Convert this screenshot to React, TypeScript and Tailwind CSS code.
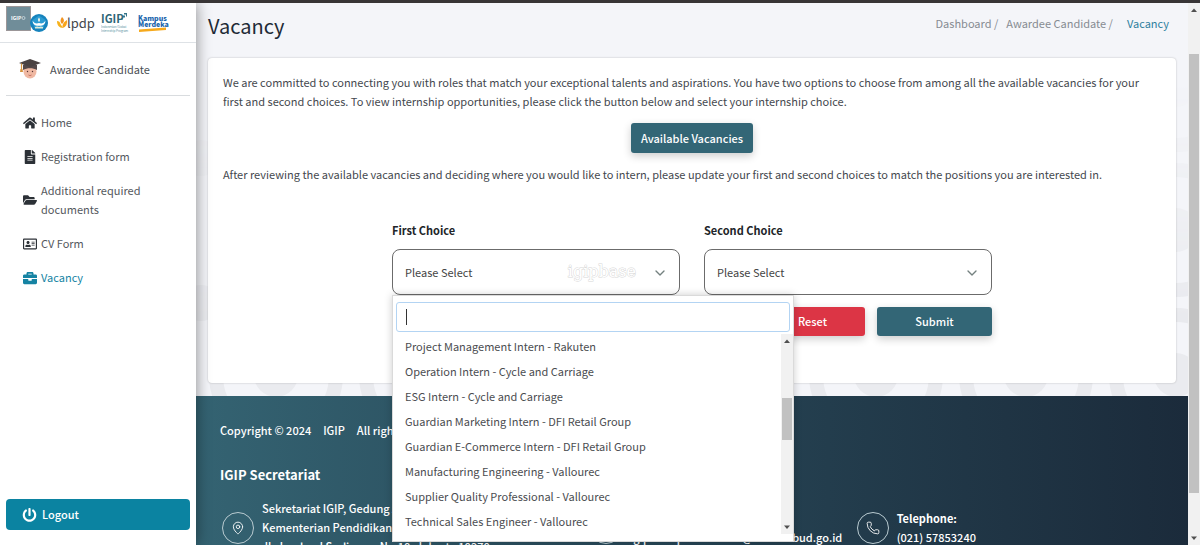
import { useState } from "react";
import type { ReactNode } from "react";
import { FaHome, FaFileAlt, FaFolderOpen, FaBriefcase, FaPowerOff, FaRegAddressCard } from "react-icons/fa";
import { ChevronDown, MapPin, Mail, Phone } from "lucide-react";

const menu = [
  { label: "Home", icon: <FaHome /> },
  { label: "Registration form", icon: <FaFileAlt /> },
  { label: "Additional required documents", icon: <FaFolderOpen /> },
  { label: "CV Form", icon: <FaRegAddressCard /> },
  { label: "Vacancy", icon: <FaBriefcase />, active: true },
];

const vacancies = [
  "Project Management Intern - Rakuten",
  "Operation Intern - Cycle and Carriage",
  "ESG Intern - Cycle and Carriage",
  "Guardian Marketing Intern - DFI Retail Group",
  "Guardian E-Commerce Intern - DFI Retail Group",
  "Manufacturing Engineering - Vallourec",
  "Supplier Quality Professional - Vallourec",
  "Technical Sales Engineer - Vallourec",
];

function Logos() {
  return (
    <div className="flex h-10 items-center border-b border-[#dee2e6] pl-1.5">
      <svg className="mt-[3px] h-[25px] w-[25px] self-start" viewBox="0 0 25 25">
        <rect width="25" height="25" fill="#9b9698" />
        <rect x="1" y="1" width="23" height="23" fill="#708d99" />
        <text x="5" y="14" fontSize="5" fontWeight="700" fill="#fff">IGIP</text>
        <circle cx="17.5" cy="12" r="1.5" fill="none" stroke="#dce8ec" strokeWidth="0.7" />
      </svg>
      <svg className="-ml-0.5 h-5 w-5" viewBox="0 0 20 20">
        <circle cx="10" cy="10" r="9" fill="#1683bd" />
        <path d="M10 2.5 16.5 7 14.5 15H5.5L3.5 7Z" fill="#2b9bd2" />
        <path d="M10 4.5c1.3 1.6 1.3 3 0 4.5-1.3-1.5-1.3-2.9 0-4.5Z" fill="#f1f4ea" />
        <path d="M3.5 7.5c1.5 3 4 3.3 6.5 2.5 2.5.8 5 .5 6.5-2.5-.2 3.5-1.7 5-4.5 5.3H8C5.2 12.5 3.7 11 3.5 7.5Z" fill="#fff" />
        <path d="M6 14c1.5-.8 3-.8 4 0 1-.8 2.5-.8 4 0v1.5H6Z" fill="#dcebd9" />
      </svg>
      <svg className="ml-2 h-6 w-[38px]" viewBox="0 0 38 24">
        <path d="M0 10c2 0 3 1 3.500 3L6 17C2 17 0 14 0 10Z" fill="#f7b21c" />
        <path d="M5 6c3 3 2 5 0 7-2-2-2-4 0-7Z" fill="#f3941f" />
        <path d="M10 9c.5 4-1 7-4.500 8-.5-3.500 1.500-6.500 4.500-8Z" fill="#f9a51a" />
        <text x="10" y="17" fontSize="13" fill="#44474b">lpdp</text>
      </svg>
      <svg className="ml-1.5 h-6 w-8" viewBox="0 0 32 24">
        <text x="0" y="12" fontSize="11" fontWeight="700" fill="#2d6677">IGIP</text>
        <path d="M22 4.500h2v2h-2zM20.500 7h1.500v1.500h-1.500zM23 2h3v3.500h-1v-2h-2z" fill="#357488" />
        <text x="0" y="17" fontSize="3" fill="#5c94a3">Indonesian Global</text>
        <text x="0" y="21" fontSize="3" fill="#5c94a3">Internship Program</text>
      </svg>
      <svg className="ml-1 h-6 w-9" viewBox="0 0 36 24">
        <text x="1" y="9.500" fontSize="7" fontWeight="900" fill="#2166ad">Kampus</text>
        <text x="1" y="15.500" fontSize="7" fontWeight="900" fill="#2166ad">Merdeka</text>
        <path d="M2 18.500 29 16.500v2.500L2 21Z" fill="#f6a91c" />
      </svg>
    </div>
  );
}

function Graduate() {
  return (
    <svg className="h-5 w-6" viewBox="0 0 24 20">
      <ellipse cx="12" cy="12.5" rx="6.5" ry="7" fill="#efb8a2" />
      <path d="M5 6h14v5c-4-2.500-10-2.500-14 0Z" fill="#54494a" />
      <path d="M12 0 23 4 12 8 1 4Z" fill="#4a4242" />
      <path d="M3.5 4.5v6" stroke="#d5933c" strokeWidth="1.2" />
      <path d="M2.5 10h2l.5 3H2Z" fill="#d5933c" />
      <circle cx="9.5" cy="12.5" r="0.7" fill="#533" />
      <circle cx="14.5" cy="12.5" r="0.7" fill="#533" />
      <path d="M10.5 16c1 .7 2 .7 3 0" stroke="#b5574d" fill="none" strokeWidth="0.8" />
    </svg>
  );
}

function Sidebar() {
  return (
    <aside className="relative z-20 flex w-[196px] shrink-0 flex-col bg-white shadow-[0_0_14px_rgba(0,0,0,0.45)]">
      <Logos />
      <div className="mx-1.5 flex h-[53px] items-center gap-2 border-b border-[#d9dcdf] pl-3 text-[#4b4f54]">
        <Graduate />
        <span>Awardee Candidate</span>
      </div>
      <nav className="pt-2.5">
        {menu.map((item) => (
          <a
            key={item.label}
            href="#"
            className={
              item.active
                ? "mb-px flex items-center gap-1 py-[7px] pr-10 pl-[22px] text-[#1583a3]"
                : "mb-px flex items-center gap-1 py-[7px] pr-10 pl-[22px] text-[#54585d]"
            }
          >
            <span className={item.active ? "text-[14px]" : "text-[14px] text-[#2c3137]"}>
              <span className="flex w-[15px] justify-center">{item.icon}</span>
            </span>
            {item.label}
          </a>
        ))}
      </nav>
      <button className="mx-1.5 mt-auto mb-[15px] flex h-[31px] items-center gap-[5px] rounded bg-[#0b83a1] pl-4 font-medium text-white">
        <FaPowerOff className="h-[14px] w-[15px]" />
        Logout
      </button>
    </aside>
  );
}

// faint batik rings behind the content
function Pattern() {
  return (
    <svg className="absolute inset-0 h-full w-full" aria-hidden="true">
      <defs>
        <pattern id="rings" width="150" height="145" x="5" y="10" patternUnits="userSpaceOnUse">
          <circle cx="75" cy="72" r="60" fill="none" stroke="#e9eaee" strokeWidth="14" />
          <circle cx="75" cy="72" r="22" fill="#eaebef" />
          <circle cx="0" cy="0" r="18" fill="#ecedf1" />
          <circle cx="150" cy="0" r="18" fill="#ecedf1" />
          <circle cx="0" cy="145" r="18" fill="#ecedf1" />
          <circle cx="150" cy="145" r="18" fill="#ecedf1" />
        </pattern>
        <linearGradient id="fade" x1="0" y1="0" x2="0" y2="1">
          <stop offset="0.2" stopColor="#000" />
          <stop offset="0.8" stopColor="#fff" />
        </linearGradient>
        <mask id="fadeMask">
          <rect width="100%" height="100%" fill="url(#fade)" />
        </mask>
      </defs>
      <rect width="100%" height="100%" fill="url(#rings)" mask="url(#fadeMask)" />
    </svg>
  );
}

function ChoiceSelect({ id, label, children }: { id: string; label: string; children?: ReactNode }) {
  return (
    <div>
      <label htmlFor={id} className="block font-bold text-[#212529]">
        {label}
      </label>
      <div className="relative mt-[9px]">
        <select
          id={id}
          className="block h-[46px] w-full appearance-none rounded-lg border border-[#6b6b6b] bg-white px-3 text-[#444] outline-none"
        >
          <option>Please Select</option>
          {vacancies.map((v) => (
            <option key={v}>{v}</option>
          ))}
        </select>
        <ChevronDown className="pointer-events-none absolute top-4 right-3 h-4 w-4 text-[#74817f]" />
        {children}
      </div>
    </div>
  );
}

function Dropdown() {
  const [query, setQuery] = useState("");
  const found = vacancies.filter((v) => v.toLowerCase().includes(query.toLowerCase()));

  return (
    <div className="absolute top-full left-0 z-10 w-[402px] border border-[#dadada] bg-white pb-[7px] shadow-[0_0_8px_rgba(0,0,0,0.2)]">
      <div className="relative px-[3px] pt-1.5">
        <input
          aria-label="Search vacancy"
          value={query}
          onChange={(e) => setQuery(e.target.value)}
          className="block h-[30px] w-full rounded-[3px] border border-[#b3d4f3] px-2 outline-none"
        />
        {!query && <span className="absolute top-[13px] left-[13px] h-4 w-px bg-[#333]" />}
      </div>
      <div className="mt-0.5 flex">
        <ul className="flex-1 text-[#4a4c50]">
          {found.map((v) => (
            <li key={v} className="px-3 leading-[25px]">
              {v}
            </li>
          ))}
        </ul>
        <ScrollBar>
          <span className="flex-[51]" />
          <span className="flex-[43] bg-[#c1c1c1]" />
          <span className="flex-[81]" />
        </ScrollBar>
      </div>
    </div>
  );
}

function ScrollBar({ children }: { children: ReactNode }) {
  return (
    <div className="flex w-3 shrink-0 flex-col bg-[#f1f1f1] px-px">
      <svg className="h-3.5 w-full" viewBox="0 0 10 14">
        <path d="M5 5.500 8 9H2Z" fill="#505050" />
      </svg>
      {children}
      <svg className="h-3.5 w-full" viewBox="0 0 10 14">
        <path d="M5 9 8 5.500H2Z" fill="#505050" />
      </svg>
    </div>
  );
}

function Contact({ icon, children }: { icon: ReactNode; children: ReactNode }) {
  return (
    <div className="flex items-center gap-2">
      <span className="flex h-8 w-8 shrink-0 items-center justify-center rounded-full border border-[#b9cbd1]">
        {icon}
      </span>
      <div className="whitespace-nowrap">{children}</div>
    </div>
  );
}

function Footer() {
  return (
    <footer className="relative flex-1 bg-linear-to-r from-[#346372] via-[#264454] to-[#1b2b3b] px-6 pt-[25px] font-medium text-white">
      <p className="flex gap-3">
        <span>Copyright © 2024</span>
        <span>IGIP</span>
        <span>All rights reserved</span>
      </p>
      <h2 className="mt-[25px] text-[13px] font-bold">IGIP Secretariat</h2>
      <div className="mt-[15px] grid grid-cols-[369fr_267fr_308fr] pl-0.5">
        <Contact icon={<MapPin className="h-3.5 w-3.5" strokeWidth={1.5} />}>
          <p>Sekretariat IGIP, Gedung A Lantai 2</p>
          <p>Kementerian Pendidikan, Kebudayaan</p>
          <p>Jl. Jenderal Sudirman No.10, Jakarta 10270</p>
        </Contact>
        <Contact icon={<Mail className="h-3.5 w-3.5" strokeWidth={1.5} />}>
          <p className="font-bold">Email:</p>
          <p>igipman.pusmerdeka@kemdikbud.go.id</p>
        </Contact>
        <Contact icon={<Phone className="h-3.5 w-3.5" strokeWidth={1.5} />}>
          <p className="font-bold">Telephone:</p>
          <p>(021) 57853240</p>
        </Contact>
      </div>
    </footer>
  );
}

export default function App() {
  return (
    <div className="flex h-screen flex-col overflow-hidden border-t-[3px] border-[#383536] font-['Noto_Sans_CJK_SC',sans-serif] text-[11px] leading-[19px]">
      <div className="flex min-h-0 flex-1">
        <Sidebar />
        <div className="flex min-w-0 flex-1 flex-col">
          <main className="relative z-10 bg-[#f4f5f9] px-3 pb-[13px]">
            <Pattern />
            <div className="relative flex h-[55px] justify-between">
              <h1 className="pt-2 text-[20px] leading-[30px] text-[#212a36]">Vacancy</h1>
              <nav className="flex pt-[11px] pr-[7px] text-[#868b92]">
                <a href="#">Dashboard /</a>
                <a href="#" className="ml-2">Awardee Candidate /</a>
                <a href="#" className="ml-3.5 text-[#2f7f9e]">Vacancy</a>
              </nav>
            </div>

            <section className="relative rounded bg-white px-[15px] pt-[15px] pb-[47px] text-[#44484e] shadow-[0_0_2px_rgba(0,0,0,0.25)]">
              <p>
                We are committed to connecting you with roles that match your exceptional talents and aspirations. You
                have two options to choose from among all the available vacancies for your first and second choices. To
                view internship opportunities, please click the button below and select your internship choice.
              </p>
              <div className="mt-3 flex justify-center">
                <button className="h-[30px] rounded-[3px] bg-[#336676] px-2.5 font-medium text-white shadow-[0_3px_8px_rgba(0,0,0,0.2)]">
                  Available Vacancies
                </button>
              </div>
              <p className="mt-3">
                After reviewing the available vacancies and deciding where you would like to intern, please update your
                first and second choices to match the positions you are interested in.
              </p>

              <form className="mx-auto mt-[37px] max-w-[600px]" onSubmit={(e) => e.preventDefault()}>
                <div className="grid grid-cols-2 gap-6">
                  <ChoiceSelect id="first" label="First Choice">
                    <span className="pointer-events-none absolute top-3 right-11 font-['DejaVu_Serif',serif] text-[16px] leading-[22px] text-white [-webkit-text-stroke:1px_#d8d8d8] [paint-order:stroke]">
                      igipbase
                    </span>
                    <Dropdown />
                  </ChoiceSelect>
                  <ChoiceSelect id="second" label="Second Choice" />
                </div>
                <div className="mt-3 flex justify-end gap-3 font-medium text-white">
                  <button
                    type="reset"
                    className="h-[29px] w-[115px] rounded-[3px] bg-[#dc3545] pl-2.5 shadow-[0_3px_8px_rgba(0,0,0,0.2)]"
                  >
                    Reset
                  </button>
                  <button
                    type="submit"
                    className="h-[29px] w-[115px] rounded-[3px] bg-[#336676] shadow-[0_3px_8px_rgba(0,0,0,0.2)]"
                  >
                    Submit
                  </button>
                </div>
              </form>
            </section>
          </main>
          <Footer />
        </div>
        <ScrollBar>
          <span className="flex-[37]" />
          <span className="flex-[439] bg-[#c1c1c1]" />
          <span className="flex-[38]" />
        </ScrollBar>
      </div>
    </div>
  );
}
